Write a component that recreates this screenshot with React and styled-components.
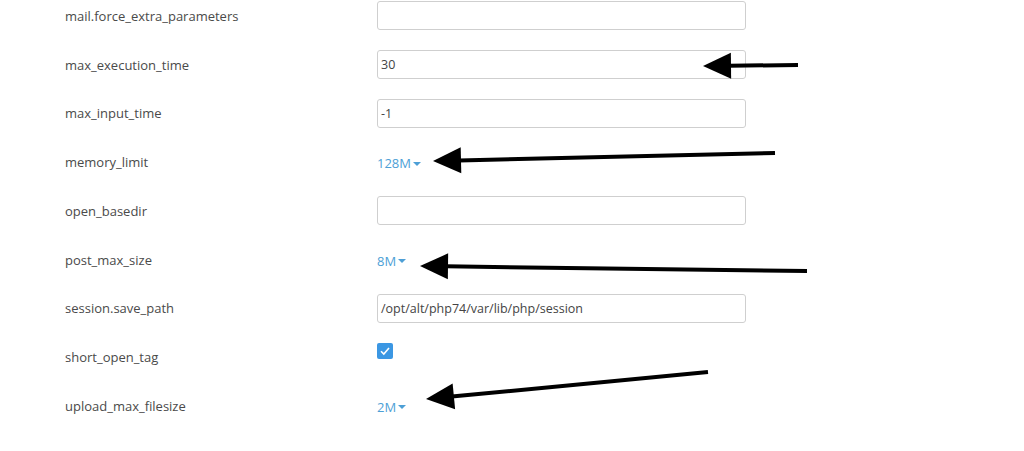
import React from 'react';
import styled, { createGlobalStyle } from 'styled-components';

const Global = createGlobalStyle`
  body {
    margin: 0;
    background: #fff;
    font-family: "Open Sans", "Liberation Sans", sans-serif;
  }
`;

const Page = styled.main`
  position: relative;
  width: 1024px;
  height: 451px;
  overflow: hidden;
`;

const Form = styled.div`
  margin-top: -8.4px;
  padding-left: 65px;
  display: flex;
  flex-direction: column;
`;

const Row = styled.div`
  display: grid;
  grid-template-columns: 312px 369px;
  align-items: center;
  height: 48.75px;
`;

const Label = styled.span`
  font-size: 13px;
  color: #4a4a4a;
`;

const Input = styled.div`
  box-sizing: border-box;
  height: 29px;
  border: 1px solid #cfcfcf;
  border-radius: 3px;
  padding-left: 3px;
  font-size: 12.5px;
  color: #444;
  display: flex;
  align-items: center;
`;

const Drop = styled.span`
  font-size: 13px;
  color: #4d9fd6;
  display: inline-flex;
  align-items: center;
  gap: 2px;
  &::after {
    content: '';
    margin-top: 1px;
    border-left: 4px solid transparent;
    border-right: 4px solid transparent;
    border-top: 4.5px solid #4d9fd6;
  }
`;

const Check = styled.span`
  width: 16px;
  height: 16px;
  border-radius: 2px;
  background: #3b97e3;
  display: flex;
  align-items: center;
  justify-content: center;
  margin-top: -12px;
`;

const Overlay = styled.svg`
  position: absolute;
  left: 0;
  top: 0;
  pointer-events: none;
`;

const rows = [
  { name: 'mail.force_extra_parameters', type: 'input', value: '' },
  { name: 'max_execution_time', type: 'input', value: '30' },
  { name: 'max_input_time', type: 'input', value: '-1' },
  { name: 'memory_limit', type: 'drop', value: '128M' },
  { name: 'open_basedir', type: 'input', value: '' },
  { name: 'post_max_size', type: 'drop', value: '8M' },
  { name: 'session.save_path', type: 'input', value: '/opt/alt/php74/var/lib/php/session' },
  { name: 'short_open_tag', type: 'check' },
  { name: 'upload_max_filesize', type: 'drop', value: '2M' },
];

// tail point, tip point
const arrows = [
  [798, 65, 703, 66],
  [775, 153, 433, 161],
  [807, 271, 420, 266],
  [708, 372, 426, 399],
];

function Arrow({ a }) {
  const [x1, y1, x2, y2] = a;
  const dx = x1 - x2, dy = y1 - y2;
  const len = Math.hypot(dx, dy);
  const ux = dx / len, uy = dy / len;
  const hl = 28, hw = 13;
  const bx = x2 + ux * hl, by = y2 + uy * hl;
  const px = -uy, py = ux;
  const pts = `${x2},${y2} ${bx + px * hw},${by + py * hw} ${bx - px * hw},${by - py * hw}`;
  return (
    <g>
      <line x1={x1} y1={y1} x2={bx - ux * 2} y2={by - uy * 2} stroke="#000" strokeWidth="4" />
      <polygon points={pts} fill="#000" />
    </g>
  );
}

export default function App() {
  return (
    <Page>
      <Global />
      <Form>
        {rows.map((r) => (
          <Row key={r.name}>
            <Label>{r.name}</Label>
            {r.type === 'input' && <Input>{r.value}</Input>}
            {r.type === 'drop' && <div><Drop>{r.value}</Drop></div>}
            {r.type === 'check' && (
              <Check>
                <svg width="12" height="12" viewBox="0 0 12 12">
                  <path d="M2 6.2 L4.8 9 L10 3" fill="none" stroke="#fff" strokeWidth="1.6" />
                </svg>
              </Check>
            )}
          </Row>
        ))}
      </Form>
      <Overlay width="1024" height="451">
        {arrows.map((a, i) => <Arrow key={i} a={a} />)}
      </Overlay>
    </Page>
  );
}
